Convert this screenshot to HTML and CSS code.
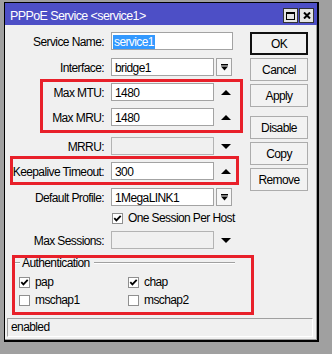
FILE: index.html
```html
<!DOCTYPE html>
<html>
<head>
<title>PPPoE Service &lt;service1&gt;</title>
<link rel="stylesheet" href="styles.css">
</head>
<body>
<div class="window">
  <div class="titlebar">
    <span class="title">PPPoE Service &lt;service1&gt;</span>
    <span class="tbtn"><svg width="9" height="8" viewBox="0 0 9 8"><rect x="0.5" y="0.5" width="8" height="7" fill="none" stroke="#000"/><rect x="0" y="0" width="9" height="2" fill="#000"/></svg></span>
    <span class="tbtn"><svg width="8" height="7" viewBox="0 0 8 7"><path d="M1 0.5 L7 6.5 M7 0.5 L1 6.5" stroke="#000" stroke-width="2"/></svg></span>
  </div>
  <div class="content">
    <div class="main">
      <div class="form">
        <div class="row">
          <span class="lbl">Service Name:</span>
          <span class="field wide"><span class="sel">service1</span></span>
        </div>
        <div class="row gap8">
          <span class="lbl">Interface:</span>
          <span class="field">bridge1</span>
          <span class="dd"><svg width="7" height="7" viewBox="0 0 7 7"><rect x="0" y="0" width="7" height="1.5" fill="#000"/><polygon points="0,2.5 7,2.5 3.5,6.5" fill="#000"/></svg></span>
        </div>
        <div class="mark mark-mtu">
          <div class="row">
            <span class="lbl">Max MTU:</span>
            <span class="field">1480</span>
            <span class="spin"><svg width="10" height="5" viewBox="0 0 10 5"><polygon points="0,5 10,5 5,0" fill="#000"/></svg></span>
          </div>
          <div class="row">
            <span class="lbl">Max MRU:</span>
            <span class="field">1480</span>
            <span class="spin"><svg width="10" height="5" viewBox="0 0 10 5"><polygon points="0,5 10,5 5,0" fill="#000"/></svg></span>
          </div>
        </div>
        <div class="row gap11">
          <span class="lbl">MRRU:</span>
          <span class="field off"></span>
          <span class="spin"><svg width="10" height="5" viewBox="0 0 10 5"><polygon points="0,0 10,0 5,5" fill="#000"/></svg></span>
        </div>
        <div class="mark mark-keep">
          <div class="row">
            <span class="lbl">Keepalive Timeout:</span>
            <span class="field">300</span>
            <span class="spin"><svg width="10" height="5" viewBox="0 0 10 5"><polygon points="0,5 10,5 5,0" fill="#000"/></svg></span>
          </div>
        </div>
        <div class="row gap8">
          <span class="lbl">Default Profile:</span>
          <span class="field">1MegaLINK1</span>
          <span class="dd"><svg width="7" height="7" viewBox="0 0 7 7"><rect x="0" y="0" width="7" height="1.5" fill="#000"/><polygon points="0,2.5 7,2.5 3.5,6.5" fill="#000"/></svg></span>
        </div>
        <div class="row check-row">
          <span class="cb"><svg width="9" height="9" viewBox="0 0 9 9"><path d="M1.3 4.2 L3.4 6.4 L7.7 1.8" fill="none" stroke="#000" stroke-width="1.8"/></svg></span>
          One Session Per Host
        </div>
        <div class="row gap5">
          <span class="lbl">Max Sessions:</span>
          <span class="field off"></span>
          <span class="spin"><svg width="10" height="5" viewBox="0 0 10 5"><polygon points="0,0 10,0 5,5" fill="#000"/></svg></span>
        </div>
        <div class="mark mark-auth">
          <div class="group">
            <div class="legend"><span class="tick"></span><span>Authentication</span><span class="line"></span></div>
            <div class="opts">
              <div class="opt"><span class="cb"><svg width="9" height="9" viewBox="0 0 9 9"><path d="M1.3 4.2 L3.4 6.4 L7.7 1.8" fill="none" stroke="#000" stroke-width="1.8"/></svg></span>pap</div>
              <div class="opt"><span class="cb"><svg width="9" height="9" viewBox="0 0 9 9"><path d="M1.3 4.2 L3.4 6.4 L7.7 1.8" fill="none" stroke="#000" stroke-width="1.8"/></svg></span>chap</div>
              <div class="opt"><span class="cb"></span>mschap1</div>
              <div class="opt"><span class="cb"></span>mschap2</div>
            </div>
          </div>
        </div>
      </div>
      <div class="buttons">
        <span class="btn default">OK</span>
        <span class="btn">Cancel</span>
        <span class="btn">Apply</span>
        <span class="btn split">Disable</span>
        <span class="btn">Copy</span>
        <span class="btn">Remove</span>
      </div>
    </div>
    <div class="status">enabled</div>
  </div>
</div>
</body>
</html>
```

FILE: styles.css
```css
body {
 margin: 0;
 background: #a0a0a0;
 font-family: "Liberation Sans", Arial, sans-serif;
 font-size: 12px;
 letter-spacing: -0.6px;
 color: #000;
}

.window {
 margin: 2px 0 0 4px;
 width: 315px;
 height: 340px;
 box-sizing: border-box;
 border: 1px solid #000;
 border-right-width: 2px;
 border-bottom-width: 2px;
 background: #f0f0f0;
 box-shadow: inset -1px -1px #a0a0a0;
 display: flex;
 flex-direction: column;
}

/* title bar */
.titlebar {
 height: 22px;
 background: #4d4fc6;
 color: #fff;
 display: flex;
 align-items: center;
 padding: 0 3px 0 5px;
}
.title { flex: 1; padding-top: 3px; font-size: 12.5px; }
.tbtn {
 width: 15px;
 height: 15px;
 box-sizing: border-box;
 border: 1px solid #333;
 background: #e4e4e4;
 display: flex;
 align-items: center;
 justify-content: center;
 margin-left: 1px;
 align-self: flex-end;
 margin-bottom: 2px;
}

.content {
 flex: 1;
 display: flex;
 flex-direction: column;
}
.main { display: flex; }

/* form rows */
.form { width: 245px; padding-top: 7px; }
.row {
 display: flex;
 align-items: center;
 height: 18px;
 margin-top: 7px;
 white-space: nowrap;
}
.form > .row:first-child { margin-top: 0; }
.gap8 { margin-top: 8px; }
.gap11 { margin-top: 11px; }
.gap5 { margin-top: 5px; }
.lbl {
 width: 99px;
 margin-right: 7px;
 padding-top: 2px;
 text-align: right;
}
.field {
 width: 103px;
 height: 18px;
 box-sizing: border-box;
 border: 1px solid #a3a3a3;
 background: #fff;
 padding: 1px 3px 0;
 line-height: 16px;
}
.field.wide { width: 122px; padding-left: 1px; }
.field.off { background: transparent; border-color: #b3b3b3; }
.sel {
 display: inline-block;
 background: #3399ff;
 color: #fff;
 line-height: 14px;
 padding: 0 1px;
}
.dd {
 width: 16px;
 height: 18px;
 margin-left: 2px;
 box-sizing: border-box;
 border: 1px solid #a3a3a3;
 background: #f7f7f7;
 display: flex;
 align-items: center;
 justify-content: center;
}
.spin { width: 10px; margin-left: 7px; display: flex; }

.check-row { height: 16px; margin-top: 4px; padding-left: 107px; }
.cb {
 width: 11px;
 height: 11px;
 box-sizing: border-box;
 border: 1px solid #8f8f8f;
 background: #fff;
 margin-right: 5px;
 display: flex;
 align-items: center;
 justify-content: center;
 flex: none;
}

/* authentication group */
.group { margin: 7px 0 0 9px; width: 221px; }
.legend {
 display: flex;
 align-items: center;
 height: 14px;
}
.tick, .line {
 height: 0;
 border-top: 1px solid #a0a0a0;
 border-bottom: 1px solid #fff;
}
.tick { width: 6px; margin-right: 2px; }
.line { flex: 1; margin-left: 4px; }
.opts {
 display: grid;
 grid-template-columns: 109px 1fr;
 grid-auto-rows: 18px;
 margin-top: 3px;
 padding-left: 5px;
}
.opt { display: flex; align-items: center; }

/* red marks drawn over the form */
.mark { position: relative; }
.mark::after {
 content: "";
 position: absolute;
 border: 3px solid #e8202a;
}
.mark-mtu { margin-top: 7px; }
.mark-mtu > .row:first-child { margin-top: 0; }
.mark-mtu::after { top: -4px; bottom: -7px; left: 35px; right: 7px; }
.mark-keep { margin-top: 7px; }
.mark-keep > .row { margin-top: 0; }
.mark-keep::after { top: -6px; bottom: -5px; left: 5px; right: 11px; }
.mark-auth::after { top: -1px; bottom: -6px; left: 7px; right: -4px; }

/* buttons */
.buttons {
 width: 58px;
 padding-top: 7px;
 display: flex;
 flex-direction: column;
 gap: 3px;
}
.btn {
 height: 23px;
 box-sizing: border-box;
 border: 1px solid #acacac;
 background: #f2f2f2;
 display: flex;
 align-items: center;
 justify-content: center;
 padding-top: 1px;
}
.btn.default { border: 2px solid #111; }
.btn.split { margin-top: 6px; }

.status {
 margin: auto 4px 3px 2px;
 height: 19px;
 box-sizing: border-box;
 border: 1px solid #fff;
 border-top-color: #a0a0a0;
 border-left-color: #a0a0a0;
 padding-left: 3px;
 line-height: 17px;
}
```
